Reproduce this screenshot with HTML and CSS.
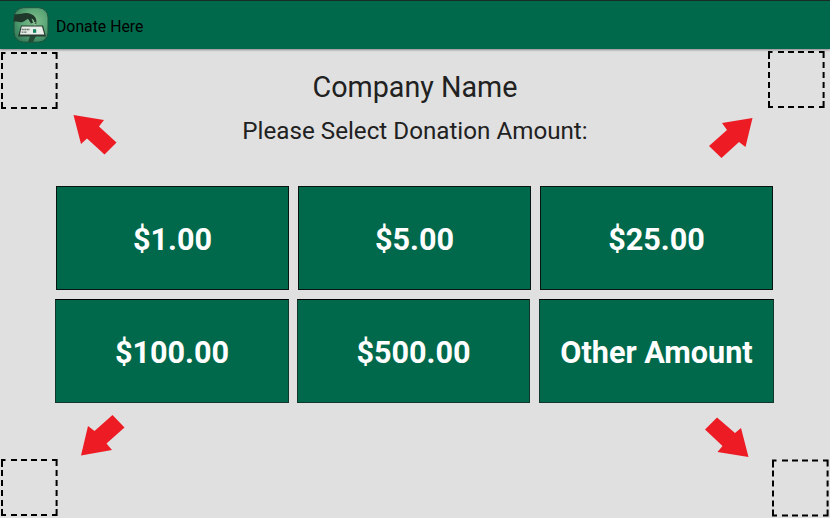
FILE: index.html
```
<!DOCTYPE html>
<html lang="en">
<head>
<meta charset="utf-8">
<title>Donate Here</title>
<link rel="stylesheet" href="styles.css">
</head>
<body>
<header class="bar">
  <svg class="logo" viewBox="0 0 36 36" aria-hidden="true">
    <defs><radialGradient id="glow" cx=".6" cy=".4" r=".7"><stop offset="0" stop-color="#83bd8c"/><stop offset=".5" stop-color="#5ca878"/><stop offset="1" stop-color="#337b58"/></radialGradient></defs>
    <rect x="1" y=".7" width="34" height="34.400" rx="9.500" fill="url(#glow)" stroke="#20543f" stroke-width="1"/>
    <path d="M1.500 7C5 8 9 6 13 6c4 .2 7 1.500 9 4 1.400 2 1.700 4 1.200 7l-1.700-.2-.5-3.500-2.500-2 1.500 4.500-2 .8-3-4.800c-3 2-5 3.500-7.500 3.400-2.500-.2-4-1-7-.5z" fill="#20382b"/>
    <path d="M21.800 15v8" stroke="#b1d4b4" stroke-width="1.200" stroke-dasharray="1.500 1"/>
    <path d="M17 29h6l-3 6h-5z" fill="#234c37"/>
    <path d="M8 18.500h22l3 11H5z" fill="#263c31"/>
    <path d="M8.700 19.600h20.300l2.300 8H7z" fill="#e9eee8"/>
    <path d="M8.800 22.500h8M8.600 25.200h5.500" stroke="#68756d" stroke-width="1.300" stroke-dasharray="2 .5"/>
    <path d="M20 22.200h3.200v3.600h-3.200z" fill="#168361"/>
  </svg>
  <span class="app-name">Donate Here</span>
</header>
<main>
  <h1>Company Name</h1>
  <h2>Please Select Donation Amount:</h2>
  <div class="amounts">
    <div class="row first">
      <button>$1.00</button><button>$5.00</button><button>$25.00</button>
    </div>
    <div class="row second">
      <button>$100.00</button><button>$500.00</button><button class="other">Other Amount</button>
    </div>
  </div>
</main>
<svg class="markers" viewBox="0 0 830 518" aria-hidden="true">
  <defs>
    <g id="corner" fill="none" stroke="#000" stroke-width="2">
      <path d="M1 8V1h3.500M51 1h4.600v6M55.600 50v6H51M5 56H1v-6"/>
      <path d="M10 1h37M10 56h37M1 11v37M55.600 11v37" stroke-dasharray="6 4"/>
    </g>
  </defs>
  <use href="#corner" x="1" y="52"/>
  <use href="#corner" x="768" y="51"/>
  <use href="#corner" x="1" y="459"/>
  <use href="#corner" x="772" y="459.500"/>
  <g fill="#ed1c24">
    <path d="M73.500 115 104 120 99 126.500 116.500 142.500 104.500 154.500 87 138.500 81 144z"/>
    <path d="M752.500 118 745.500 147 739 142 721.500 158 709 146 727 130 722 123z"/>
    <path d="M81 455.500 88 426 94.500 431 112.500 415 124.500 427.500 106.500 443.500 112 450z"/>
    <path d="M748.500 457 717.500 452 722.500 446 705 429.500 717 417.500 735 433 741 428z"/>
  </g>
</svg>
</body>
</html>
```
FILE: styles.css
```
* { box-sizing: border-box; }
body {
  position: relative;
  margin: 0;
  width: 830px;
  height: 518px;
  overflow: hidden;
  background: #e0e0e0;
  font-family: Roboto, sans-serif;
  color: #212121;
}
.bar {
  display: flex;
  align-items: center;
  height: 49px;
  padding-left: 13px;
  border-top: 1px solid #182b25;
  background: #00694b;
  box-shadow: 0 1px 2px rgba(0, 0, 0, .4);
}
.logo { width: 36px; height: 36px; }
.app-name {
  margin: 3px 0 0 7px;
  font-size: 15.8px;
  color: #000;
}
main { text-align: center; }
h1, h2 { margin: 0; font-weight: 400; }
h1 { padding-top: 20px; font-size: 28.7px; line-height: 36px; }
h2 { padding-top: 10px; font-size: 24.2px; line-height: 32px; }
.amounts {
  display: flex;
  flex-direction: column;
  gap: 9px;
  padding: 39px 55px 0;
}
.row { display: flex; gap: 9px; }
.first { padding-left: 1px; }
button {
  width: 233px;
  height: 104px;
  padding: 3px 0 0;
  border: 1px solid #06150f;
  border-radius: 0;
  background: #00694b;
  color: #fff;
  font: 700 30.6px Roboto, sans-serif;
}
.second button { border-color: #12372a; border-top-color: #000; padding-top: 2px; }
.second button:first-child { width: 234px; margin-right: -1px; }
.second .other { width: 235px; }
.markers { position: absolute; inset: 0; width: 830px; height: 518px; pointer-events: none; }
```
